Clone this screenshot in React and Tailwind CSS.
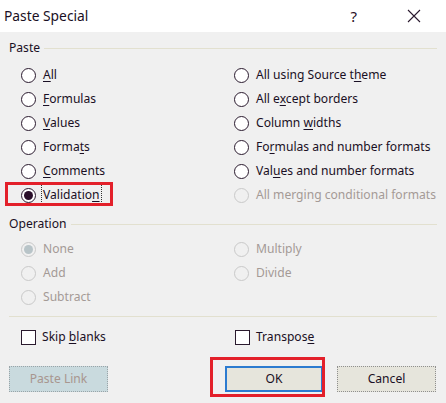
import React from 'react';

const U = ({ children }) => <span className="underline underline-offset-2">{children}</span>;

const Radio = ({ checked, disabled, label, focus }) => (
  <div className="flex items-center h-6">
    <div
      className={`w-[15px] h-[15px] rounded-full border flex items-center justify-center shrink-0 ${
        disabled ? 'border-[#c9c9c9] bg-[#f0f0f0]' : 'border-[#2a1a2e] bg-white'
      }`}
    >
      {checked && (
        <div className={`w-[9px] h-[9px] rounded-full ${disabled ? 'bg-[#b8c4c8]' : 'bg-[#2a0f2a]'}`} />
      )}
    </div>
    <span
      className={`ml-[6px] px-[1px] leading-[20px] ${disabled ? 'text-[#a49a96]' : 'text-[#1a0f24]'} ${
        focus ? 'outline outline-1 outline-dotted outline-[#333]' : ''
      }`}
    >
      {label}
    </span>
  </div>
);

const Check = ({ label }) => (
  <div className="flex items-center h-6">
    <div className="w-[15px] h-[15px] border border-[#2a1a2e] bg-white shrink-0" />
    <span className="ml-[6px] text-[#1a0f24]">{label}</span>
  </div>
);

const Header = ({ children }) => (
  <div className="flex items-center h-6 pl-[9px] pr-[9px]">
    <span className="text-[#1a0f24] mr-[4px]">{children}</span>
    <div className="flex-1 h-px bg-[#e2e0cf]" />
  </div>
);

export default function App() {
  return (
    <div
      className="w-[446px] h-[403px] bg-[#f0f0f0] flex flex-col overflow-hidden text-[12.1px]"
      style={{ fontFamily: '"Noto Sans", "Open Sans", sans-serif' }}
    >
      <div className="h-8 bg-white flex items-center shrink-0">
        <span className="ml-[4px] text-[13.8px] text-[#1a0f24]">Paste Special</span>
        <span className="ml-auto mr-[50px] text-[15px] text-[#2a0f24]">?</span>
        <svg width="14" height="14" viewBox="0 0 14 14" className="mr-[25px]">
          <path d="M1 1 L13 13 M13 1 L1 13" stroke="#2a1a2e" strokeWidth="1.1" fill="none" />
        </svg>
      </div>

      <div className="mt-1">
        <Header>Paste</Header>
      </div>

      <div className="mt-[3px] pl-[21px] flex">
        <div className="w-[213px] flex flex-col">
          <Radio label={<><U>A</U>ll</>} />
          <Radio label={<><U>F</U>ormulas</>} />
          <Radio label={<><U>V</U>alues</>} />
          <Radio label={<>Forma<U>t</U>s</>} />
          <Radio label={<><U>C</U>omments</>} />
          <div className="relative">
            <div className="absolute left-[-16px] top-[-1px] w-[108px] h-[24px] border-[3px] border-[#e3202a]" />
            <Radio checked focus label={<>Validatio<U>n</U></>} />
          </div>
        </div>
        <div className="flex flex-col">
          <Radio label={<>All using Source t<U>h</U>eme</>} />
          <Radio label={<>All e<U>x</U>cept borders</>} />
          <Radio label={<>Column <U>w</U>idths</>} />
          <Radio label={<>Fo<U>r</U>mulas and number formats</>} />
          <Radio label={<>Val<U>u</U>es and number formats</>} />
          <Radio disabled label="All merging conditional formats" />
        </div>
      </div>

      <div className="mt-[5px]">
        <Header>Operation</Header>
      </div>

      <div className="mt-[1px] pl-[21px] flex">
        <div className="w-[213px] flex flex-col">
          <Radio disabled checked label="None" />
          <Radio disabled label="Add" />
          <Radio disabled label="Subtract" />
        </div>
        <div className="flex flex-col">
          <Radio disabled label="Multiply" />
          <Radio disabled label="Divide" />
        </div>
      </div>

      <div className="mt-[7px] mx-[9px] h-px bg-[#e2e0cf]" />

      <div className="mt-[8px] pl-[21px] flex">
        <div className="w-[214px]">
          <Check label={<>Skip <U>b</U>lanks</>} />
        </div>
        <Check label={<>Transpos<U>e</U></>} />
      </div>

      <div className="mt-[17px] flex items-center px-[9px]">
        <div className="w-[99px] h-[26px] border border-dotted border-[#9aa4a8] bg-[#c9dade] flex items-center justify-center text-[#a8968f]">
          Paste Link
        </div>
        <div className="ml-[117px] relative">
          <div className="absolute left-[-15px] top-[-9px] w-[115px] h-[40px] border-[3px] border-[#e3202a]" />
          <div className="w-[98px] h-[26px] border-2 border-[#2c7bd0] bg-[#e6e5dc] flex items-center justify-center text-[#1a0f24]">
            OK
          </div>
        </div>
        <div className="ml-[14px] w-[99px] h-[26px] border border-dotted border-[#8f8f8f] bg-[#e6e5dc] flex items-center justify-center text-[#1a0f24]">
          Cancel
        </div>
      </div>
    </div>
  );
}
